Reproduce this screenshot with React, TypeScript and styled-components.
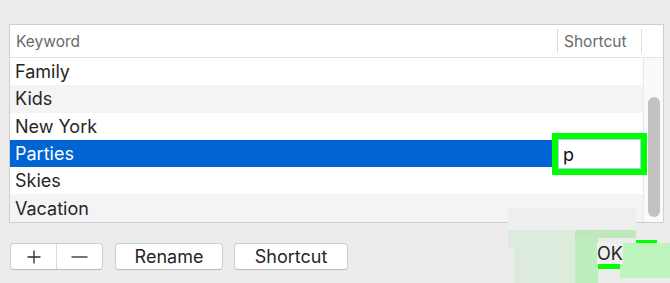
import styled, { createGlobalStyle } from 'styled-components';

const GlobalStyle = createGlobalStyle`
  html, body {
    margin: 0;
    padding: 0;
    background: #ececec;
  }
  body {
    font-family: Inter, 'Liberation Sans', Arial, sans-serif;
    color: #262626;
  }
`;

const Window = styled.div`
  position: relative;
  width: 670px;
  height: 283px;
  overflow: hidden;
  padding: 24px 0 0 9px;
  box-sizing: border-box;
  background: #ececec;
`;

const Table = styled.div`
  width: 655px;
  border: 1px solid #cfcfcf;
  background: #fff;
  box-sizing: border-box;
`;

const Header = styled.div`
  display: flex;
  height: 33px;
  border-bottom: 1px solid #e3e3e3;
  box-sizing: border-box;
`;

const HeaderCell = styled.div<{ $width?: number; $line?: boolean }>`
  display: flex;
  align-items: center;
  box-sizing: border-box;
  ${p => (p.$width ? `width: ${p.$width}px;` : 'flex: 1;')}
  padding-left: 6px;
  font-size: 15.5px;
  color: #6a6a6a;
  position: relative;
  &::after {
    content: '';
    display: ${p => (p.$line ? 'block' : 'none')};
    position: absolute;
    right: 0;
    top: 4px;
    bottom: 4px;
    width: 1px;
    background: #dcdcdc;
  }
`;

const Body = styled.div`
  position: relative;
  display: flex;
  height: 164px;
`;

const List = styled.div`
  flex: 1;
  background: #fff;
`;

const Row = styled.div<{ $striped?: boolean; $selected?: boolean }>`
  height: 27.3px;
  display: flex;
  align-items: center;
  padding-left: 5px;
  font-size: 18px;
  color: ${p => (p.$selected ? '#fff' : '#262626')};
  background: ${p => (p.$selected ? '#0064d3' : p.$striped ? '#f4f4f4' : '#fff')};
`;

const ScrollTrack = styled.div`
  width: 20px;
  border-left: 1px solid #e8e8e8;
  background: #fafafa;
  box-sizing: border-box;
  padding: 39px 3px 0 4px;
`;

const Thumb = styled.div`
  height: 120px;
  border-radius: 6px;
  background: #c2c2c2;
`;

const EditField = styled.div`
  position: absolute;
  left: 542px;
  top: 75px;
  width: 95px;
  height: 42px;
  box-sizing: border-box;
  border: 6px solid #00ff00;
  background: #fff;
  display: flex;
  align-items: center;
  padding-left: 5px;
  font-size: 18px;
  color: #111;
  box-shadow: inset 0 0 0 1px #a9ccf4;
`;

const Toolbar = styled.div`
  display: flex;
  gap: 11px;
  margin-top: 20px;
  padding-left: 1px;
`;

const Segmented = styled.div`
  display: flex;
  width: 93px;
  height: 27px;
  background: #fff;
  border: 1px solid #cdcdcd;
  border-bottom-color: #b9b9b9;
  border-radius: 4px;
  box-sizing: border-box;
  margin-right: 1px;
`;

const Segment = styled.div<{ $divider?: boolean }>`
  flex: 1;
  display: flex;
  align-items: center;
  justify-content: center;
  border-right: ${p => (p.$divider ? '1px solid #dadada' : 'none')};
`;

const Button = styled.div<{ $width: number }>`
  width: ${p => p.$width}px;
  height: 27px;
  box-sizing: border-box;
  display: flex;
  align-items: center;
  justify-content: center;
  background: #fff;
  border: 1px solid #cdcdcd;
  border-bottom-color: #b9b9b9;
  border-radius: 4px;
  font-size: 18px;
  color: #262626;
`;

// leftover highlight boxes over the hidden OK button
const Patch = styled.div<{ $x: number; $y: number; $w: number; $h: number; $c: string }>`
  position: absolute;
  left: ${p => p.$x}px;
  top: ${p => p.$y}px;
  width: ${p => p.$w}px;
  height: ${p => p.$h}px;
  background: ${p => p.$c};
`;

const OkLabel = styled.div`
  position: absolute;
  left: 597px;
  top: 243px;
  height: 21px;
  display: flex;
  align-items: center;
  font-size: 18px;
  color: #262626;
  background: #f0f0f0;
`;

const rows = ['Family', 'Kids', 'New York', 'Parties', 'Skies', 'Vacation'];

const patches = [
  { x: 508, y: 208, w: 128, h: 22, c: '#eeeeee' },
  { x: 508, y: 230, w: 67, h: 18, c: '#dcebdc' },
  { x: 514, y: 238, w: 61, h: 45, c: '#dcebdc' },
  { x: 575, y: 230, w: 61, h: 8, c: '#bde9bd' },
  { x: 575, y: 238, w: 23, h: 45, c: '#bdeebd' },
  { x: 636, y: 240, w: 21, h: 3, c: '#00ff00' },
  { x: 598, y: 264, w: 22, h: 5, c: '#00ff00' },
  { x: 620, y: 243, w: 50, h: 35, c: '#bdf4bd' },
];

export default function App() {
  return (
    <Window>
      <GlobalStyle />
      <Table>
        <Header>
          <HeaderCell $width={548} $line>
            Keyword
          </HeaderCell>
          <HeaderCell $width={84} $line>
            Shortcut
          </HeaderCell>
          <HeaderCell />
        </Header>
        <Body>
          <List>
            {rows.map((r, i) => (
              <Row key={r} $striped={i % 2 === 1} $selected={r === 'Parties'}>
                {r}
              </Row>
            ))}
          </List>
          <ScrollTrack>
            <Thumb />
          </ScrollTrack>
          <EditField>p</EditField>
        </Body>
      </Table>
      <Toolbar>
        <Segmented>
          <Segment $divider>
            <svg width="16" height="16" viewBox="0 0 16 16">
              <path d="M8 1.5v13M1.5 8h13" stroke="#2a2a2a" strokeWidth="1.3" />
            </svg>
          </Segment>
          <Segment>
            <svg width="17" height="16" viewBox="0 0 17 16">
              <path d="M0.5 8h16" stroke="#2a2a2a" strokeWidth="1.3" />
            </svg>
          </Segment>
        </Segmented>
        <Button $width={108}>Rename</Button>
        <Button $width={114}>Shortcut</Button>
      </Toolbar>
      {patches.map((p, i) => (
        <Patch key={i} $x={p.x} $y={p.y} $w={p.w} $h={p.h} $c={p.c} />
      ))}
      <OkLabel>OK</OkLabel>
    </Window>
  );
}
